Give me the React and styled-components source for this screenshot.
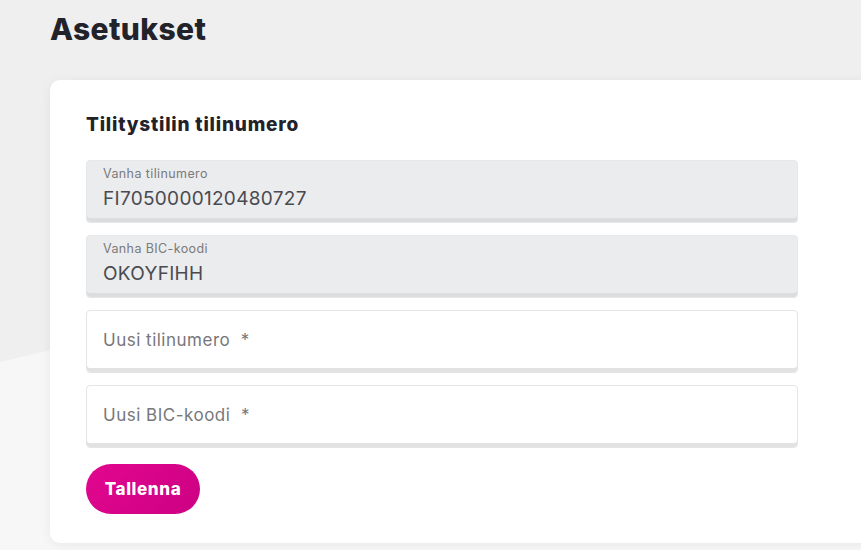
import React from "react";
import styled, { createGlobalStyle } from "styled-components";

const Global = createGlobalStyle`
  html, body { margin: 0; padding: 0; overflow: hidden; }
  body { font-family: "Inter", "Open Sans", sans-serif; background: #efefef; }
`;

const Page = styled.div`
  position: relative;
  width: 861px;
  height: 550px;
  overflow: hidden;
  padding: 0 0 0 50px;
  box-sizing: border-box;
  background: #efefef;
  &::before {
    content: "";
    position: absolute;
    inset: 0;
    background: #f7f7f7;
    clip-path: polygon(0 362px, 861px 160px, 861px 550px, 0 550px);
  }
`;

const Content = styled.div`
  position: relative;
  z-index: 1;
`;

const Title = styled.h1`
  margin: 0;
  padding-top: 9px;
  height: 80px;
  box-sizing: border-box;
  font-size: 30px;
  font-weight: 800;
  color: #22222a;
  letter-spacing: 0.4px;
  line-height: 40px;
`;

const Card = styled.section`
  width: 840px;
  height: 463px;
  box-sizing: border-box;
  background: #fff;
  border-radius: 10px;
  box-shadow: 0 2px 12px rgba(0, 0, 0, 0.06);
  padding: 30px 0 0 36px;
`;

const CardTitle = styled.h2`
  margin: 0 0 20px;
  font-size: 19px;
  font-weight: 800;
  color: #22222a;
  line-height: 30px;
  letter-spacing: 0.8px;
`;

const Form = styled.div`
  display: flex;
  flex-direction: column;
  gap: 12px;
  width: 712px;
`;

const Field = styled.div`
  height: 63px;
  box-sizing: border-box;
  border-radius: 4px;
  border: 1px solid ${(p) => (p.$readOnly ? "#e6e7e9" : "#e5e5e5")};
  background: ${(p) => (p.$readOnly ? "#ebecee" : "#ffffff")};
  box-shadow: inset 0 -4px 0 ${(p) => (p.$readOnly ? "#dcdddf" : "#e2e2e2")};
  padding: 0 16px 4px;
  display: flex;
  flex-direction: column;
  justify-content: center;
`;

const Label = styled.div`
  font-size: 12.5px;
  color: #7a7a7a;
  line-height: 16px;
  letter-spacing: 0.4px;
  margin-top: -2px;
`;

const Value = styled.div`
  font-size: 19px;
  color: #4a4a4f;
  line-height: 26px;
  letter-spacing: 0.3px;
  margin-top: 4px;
`;

const Placeholder = styled.div`
  font-size: 17px;
  color: #77777b;
  line-height: 24px;
  letter-spacing: 0.5px;
  white-space: pre;
`;

const Button = styled.button`
  margin-top: 4px;
  align-self: flex-start;
  width: 114px;
  height: 50px;
  border: none;
  border-radius: 25px;
  background: linear-gradient(135deg, #e2078f, #cc0082);
  color: #fff;
  font-family: inherit;
  font-size: 17px;
  font-weight: 800;
  letter-spacing: 0.6px;
  cursor: pointer;
`;

export default function App() {
  return (
    <>
      <Global />
      <Page>
        <Content>
          <Title>Asetukset</Title>
          <Card>
            <CardTitle>Tilitystilin tilinumero</CardTitle>
            <Form>
              <Field $readOnly>
                <Label>Vanha tilinumero</Label>
                <Value>FI7050000120480727</Value>
              </Field>
              <Field $readOnly>
                <Label>Vanha BIC-koodi</Label>
                <Value>OKOYFIHH</Value>
              </Field>
              <Field>
                <Placeholder>{"Uusi tilinumero  *"}</Placeholder>
              </Field>
              <Field>
                <Placeholder>{"Uusi BIC-koodi  *"}</Placeholder>
              </Field>
              <Button>Tallenna</Button>
            </Form>
          </Card>
        </Content>
      </Page>
    </>
  );
}
